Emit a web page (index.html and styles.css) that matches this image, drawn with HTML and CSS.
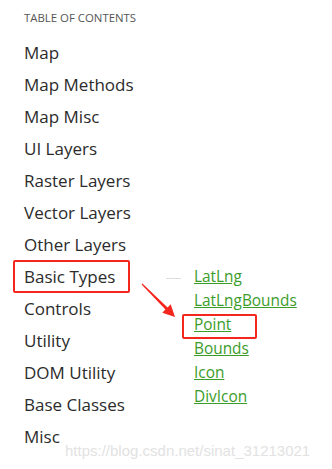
FILE: index.html
```html
<!DOCTYPE html>
<html>
<head>
<meta charset="utf-8">
<link rel="stylesheet" href="styles.css">
</head>
<body>
<div class="toc">
  <h4 class="toc-title">Table of Contents</h4>
  <ul class="toc-list">
    <li>Map</li>
    <li>Map Methods</li>
    <li>Map Misc</li>
    <li>UI Layers</li>
    <li>Raster Layers</li>
    <li>Vector Layers</li>
    <li>Other Layers</li>
    <li class="has-sub">Basic Types
      <span class="dash"></span>
      <ul class="sub">
        <li><a href="#">LatLng</a></li>
        <li><a href="#">LatLngBounds</a></li>
        <li><a href="#">Point</a></li>
        <li><a href="#">Bounds</a></li>
        <li><a href="#">Icon</a></li>
        <li><a href="#">DivIcon</a></li>
      </ul>
    </li>
    <li>Controls</li>
    <li>Utility</li>
    <li>DOM Utility</li>
    <li>Base Classes</li>
    <li>Misc</li>
  </ul>
</div>
<div class="anno box-types"></div>
<div class="anno box-point"></div>
<svg class="arrow" width="332" height="469" viewBox="0 0 332 469">
  <polygon points="142.4,283.6 167.6,307.4 170.7,304.3 175,317 162.3,312.7 165.4,309.6 141.6,284.4" fill="#f5261d"/>
</svg>
<div class="watermark">https://blog.csdn.net/sinat_31213021</div>
</body>
</html>
```
FILE: styles.css
```css
html, body {
  margin: 0;
  padding: 0;
  background: #fff;
}
body {
  width: 332px;
  height: 469px;
  overflow: hidden;
  position: relative;
  font-family: "Open Sans", "DejaVu Sans", sans-serif;
  color: #2b2b2b;
}
.toc {
  padding: 10px 0 0 24px;
}
.toc-title {
  margin: 0 0 11px;
  font-size: 11.4px;
  line-height: 16px;
  font-weight: 400;
  text-transform: uppercase;
  color: #555;
}
.toc-list {
  list-style: none;
  margin: 0;
  padding: 0;
  font-size: 17px;
  line-height: 32px;
}
.has-sub {
  position: relative;
}
.dash {
  position: absolute;
  left: 142px;
  top: 17px;
  width: 15px;
  height: 1px;
  background: #ddd;
}
.sub {
  position: absolute;
  left: 170px;
  top: 4px;
  list-style: none;
  margin: 0;
  padding: 0;
  font-size: 15.4px;
  line-height: 24px;
  white-space: nowrap;
}
.sub a {
  color: #3b9c2a;
  text-decoration: underline;
}
.anno {
  position: absolute;
  box-sizing: border-box;
  border: 2px solid #f5261d;
  border-radius: 2px;
}
.box-types {
  left: 13px;
  top: 260px;
  width: 117px;
  height: 33px;
}
.box-point {
  left: 182px;
  top: 314px;
  width: 75px;
  height: 25px;
}
.arrow {
  position: absolute;
  left: 0;
  top: 0;
}
.watermark {
  position: absolute;
  left: 65px;
  top: 442px;
  font-family: "Liberation Sans", Arial, sans-serif;
  font-size: 15px;
  line-height: 18px;
  color: #e2e2e2;
  white-space: nowrap;
}
```
